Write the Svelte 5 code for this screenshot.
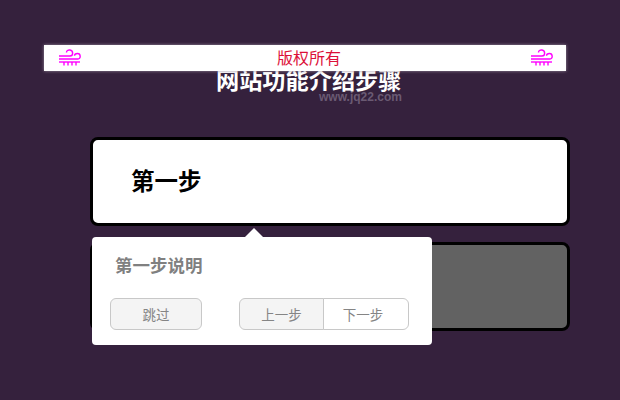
<script>
	let steps = [
		{ id: 1, title: '第一步', active: true },
		{ id: 2, title: '第二步', active: false }
	];
</script>

{#snippet wind()}
	<svg class="wind" viewBox="0 0 24 24" fill="none" stroke="currentColor" stroke-width="1.4">
		<path d="M1 10h11c3.500 0 3.500-5.500 0-6-2-.3-3.500 .8-3.500 2.500" />
		<path d="M1 13h19c3 0 3-5.500-.5-5.500-2 0-3 1-3 2.200" />
		<path d="M1 16h21" />
		<path d="M6 16v3.500M10 16v3.500M14 16v3.500M18 16v3.500" />
	</svg>
{/snippet}

<div class="page">
	<h1>网站功能介绍步骤</h1>
	<a class="mark" href="#top">www.jq22.com</a>

	<div class="steps">
		{#each steps as step (step.id)}
			<div class="step" class:active={step.active}>
				{#if step.active}<h2>{step.title}</h2>{/if}
			</div>
		{/each}
	</div>

	<div class="popover">
		<h3>第一步说明</h3>
		<div class="actions">
			<button class="btn skip">跳过</button>
			<div class="group">
				<button class="btn prev">上一步</button>
				<button class="btn next">下一步</button>
			</div>
		</div>
	</div>

	<div class="banner">
		{@render wind()}
		<span>版权所有</span>
		{@render wind()}
	</div>
</div>

<style>
	:global(body) {
		margin: 0;
		background: #35213d;
		font-family: "Liberation Sans", "Noto Sans CJK SC", sans-serif;
	}

	.page {
		position: relative;
		width: 620px;
		height: 400px;
		overflow: hidden;
		padding-top: 66px;
		box-sizing: border-box;
	}

	h1 {
		margin: 0;
		padding-left: 216px;
		font-size: 23.200px;
		line-height: 30px;
		font-weight: 700;
		color: #fff;
		white-space: nowrap;
	}

	.mark {
		display: block;
		margin: -6px 0 0 319px;
		font-size: 12px;
		line-height: 14px;
		font-weight: 700;
		color: #6a5a73;
		text-decoration: none;
	}

	.steps {
		display: flex;
		flex-direction: column;
		gap: 16px;
		margin: 33px 50px 0 90px;
	}

	.step {
		height: 83px;
		border: 3px solid #000;
		border-radius: 8px;
		background: #626262;
		display: flex;
		align-items: center;
		padding-left: 38px;
	}

	.step.active {
		background: #fff;
	}

	h2 {
		margin: 0 0 3px;
		font-size: 23.500px;
		font-weight: 700;
		color: #000;
	}

	.popover {
		position: absolute;
		left: 92px;
		top: 237px;
		width: 340px;
		height: 108px;
		box-sizing: border-box;
		padding: 17px 23px 0 18px;
		background: #fff;
		border-radius: 4px;
	}

	.popover::before {
		content: "";
		position: absolute;
		left: 153px;
		top: -9px;
		border: 9px solid transparent;
		border-top: 0;
		border-bottom-color: #fff;
	}

	h3 {
		margin: 0 0 0 5px;
		font-size: 17.500px;
		line-height: 24px;
		font-weight: 700;
		color: #808080;
	}

	.actions {
		display: flex;
		justify-content: space-between;
		margin-top: 20px;
	}

	.btn {
		height: 32px;
		padding: 0;
		border: 1px solid #c8c8c8;
		background: #f4f4f4;
		font: 13.500px "Liberation Sans", "Noto Sans CJK SC", sans-serif;
		color: #858585;
	}

	.skip {
		width: 92px;
		border-radius: 6px;
	}

	.group {
		display: flex;
	}

	.prev {
		width: 85px;
		border-radius: 6px 0 0 6px;
	}

	.next {
		width: 86px;
		margin-left: -1px;
		padding-right: 6px;
		background: #fff;
		border-radius: 0 6px 6px 0;
	}

	.banner {
		position: absolute;
		left: 44px;
		top: 45px;
		width: 522px;
		height: 26px;
		box-sizing: border-box;
		padding: 0 12px 0 14px;
		display: flex;
		align-items: center;
		justify-content: space-between;
		background: #fff;
		box-shadow: 0 0 3px #998d9f;
		font-size: 16px;
		color: #dc1038;
	}

	.banner span {
		margin: 0 0 3px 6px;
	}

	.wind {
		width: 24px;
		height: 24px;
		color: #f0f;
	}
</style>
